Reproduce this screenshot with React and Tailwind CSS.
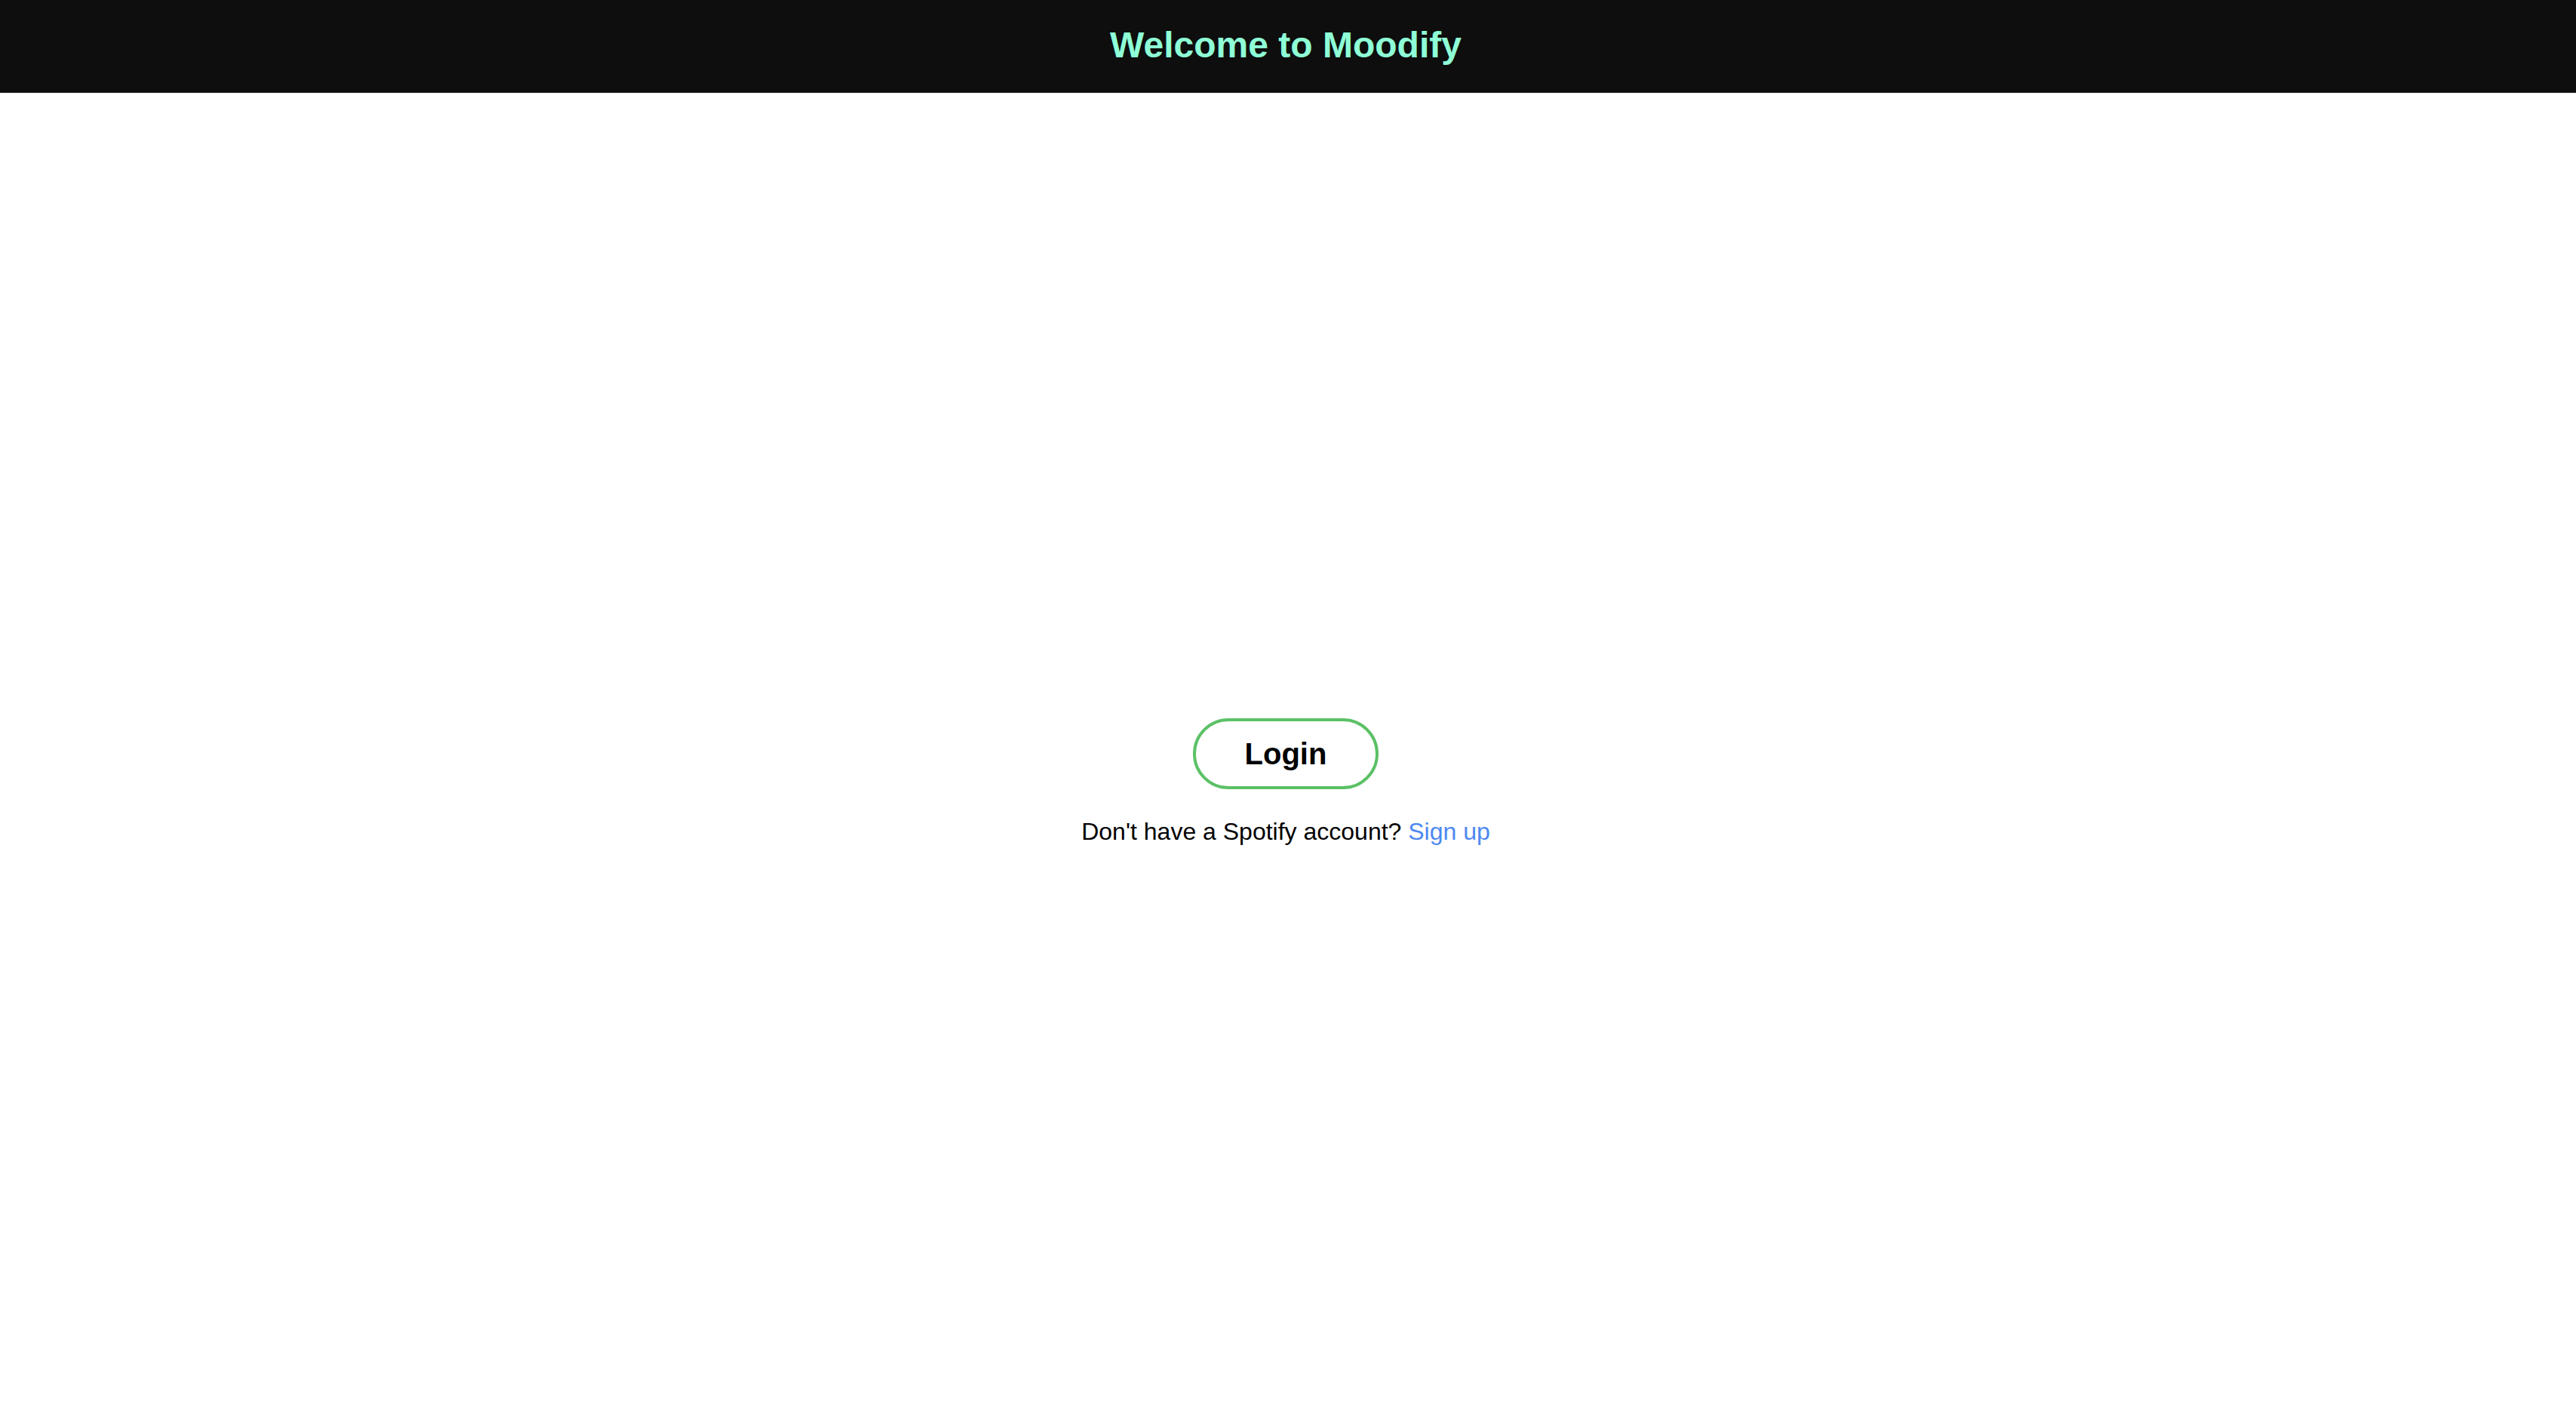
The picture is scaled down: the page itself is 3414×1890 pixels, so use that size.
export default function App() {
  return (
    <div className="min-h-screen bg-white pr-[6px] font-['Liberation_Sans',Arial,sans-serif]">
      {/* Header */}
      <header className="-mr-[6px] flex h-[123px] items-center justify-center bg-[#0e0e0e] pb-[4px] pr-[6px]">
        <h1 className="text-[48px] font-bold leading-none text-[#8effd6]">Welcome to Moodify</h1>
      </header>

      {/* Login area */}
      <main className="flex flex-col items-center pt-[829px]">
        <button
          type="button"
          className="rounded-full border-4 border-[#5bc166] bg-white px-[65px] py-[20px] text-[40px] font-bold leading-[46px] text-black"
        >
          Login
        </button>
        <p className="mt-[38px] text-[32px] leading-[37px] text-black">
          Don't have a Spotify account?{' '}
          <a href="#" className="text-[#4d88f0]">Sign up</a>
        </p>
      </main>
    </div>
  );
}
